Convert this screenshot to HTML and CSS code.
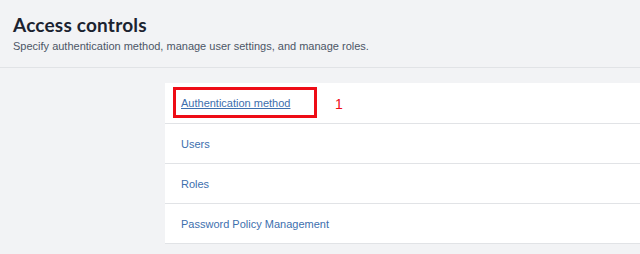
FILE: index.html
```html
<!DOCTYPE html>
<html lang="en">
<head>
    <meta charset="UTF-8">
    <meta name="viewport" content="width=device-width, initial-scale=1.0">
    <title>Access controls</title>
    <link rel="stylesheet" href="styles.css">
</head>
<body>
    <div class="page-header">
        <h1 class="page-title">Access controls</h1>
        <p class="page-subtitle">Specify authentication method, manage user settings, and manage roles.</p>
    </div>

    <div class="content">
        <ul class="menu">
            <li class="menu-item">
                <span class="highlight"><a href="#" class="menu-link menu-link-active">Authentication method</a></span>
                <span class="step">1</span>
            </li>
            <li class="menu-item"><a href="#" class="menu-link">Users</a></li>
            <li class="menu-item"><a href="#" class="menu-link">Roles</a></li>
            <li class="menu-item"><a href="#" class="menu-link">Password Policy Management</a></li>
        </ul>
    </div>
</body>
</html>
```

FILE: styles.css
```css
:root {
    --bg-page: #f2f3f5;
    --border: #e1e3e6;
    --text-primary: #1b2330;
    --text-secondary: #4c5666;
    --link: #3d6fae;
    --marker: #ee0c16;
}

* {
    margin: 0;
    padding: 0;
    box-sizing: border-box;
    font-family: 'Liberation Sans', Arial, sans-serif;
}

body {
    background-color: var(--bg-page);
    height: 254px;
    overflow: hidden;
}

.page-header {
    padding: 14px 13px 0;
    height: 68px;
    border-bottom: 1px solid var(--border);
}

.page-title {
    font-family: Lato, 'Liberation Sans', sans-serif;
    font-size: 19px;
    font-weight: 700;
    color: var(--text-primary);
    line-height: 22px;
    letter-spacing: 0.2px;
}

.page-subtitle {
    margin-top: 3px;
    font-size: 11px;
    color: var(--text-secondary);
    line-height: 14px;
}

.content {
    padding: 15px 0 0 165px;
}

.menu {
    list-style: none;
    background-color: white;
    padding-top: 1px;
}

.menu-item {
    display: flex;
    align-items: center;
    height: 40px;
    padding-left: 16px;
    border-bottom: 1px solid var(--border);
}

.menu-link {
    color: var(--link);
    font-size: 11px;
    text-decoration: none;
}

.menu-link-active {
    text-decoration: underline;
}

.highlight {
    display: flex;
    align-items: center;
    width: 144px;
    height: 31px;
    margin-top: -2px;
    margin-left: -8px;
    padding-left: 5px;
    border: 3px solid var(--marker);
}

.step {
    margin-left: 18px;
    color: var(--marker);
    font-size: 14px;
}
```
